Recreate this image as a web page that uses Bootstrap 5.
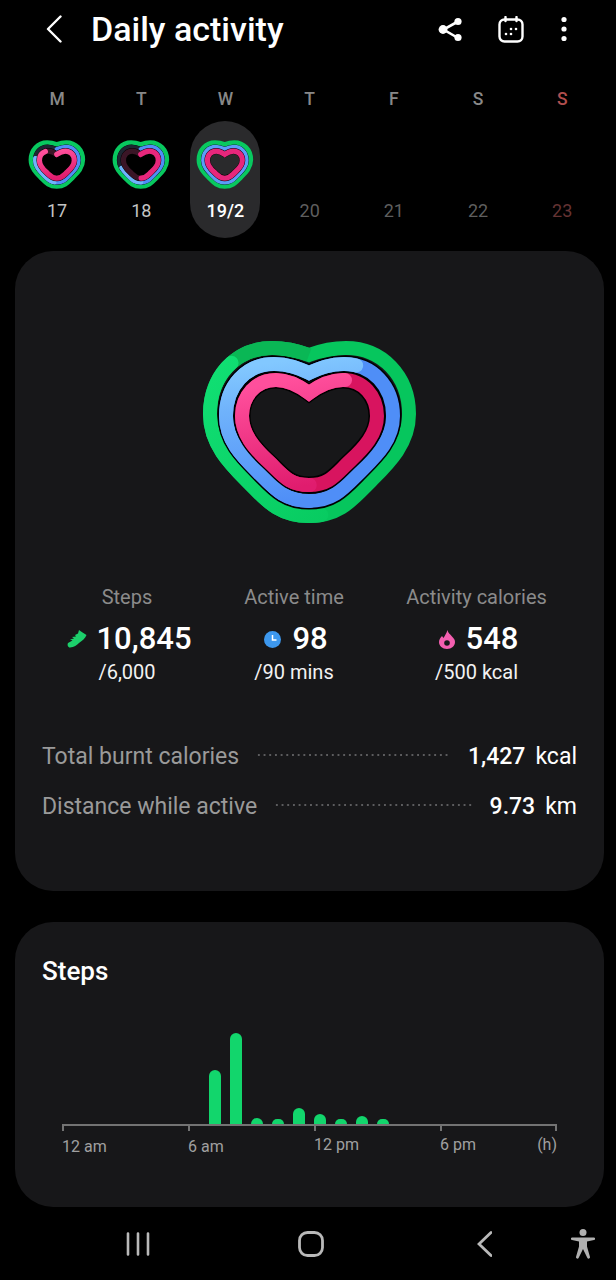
<!DOCTYPE html>
<html lang="en">
<head>
    <meta charset="UTF-8">
    <meta name="viewport" content="width=device-width, initial-scale=1.0">
    <title>Daily activity</title>
    <link href="https://cdn.jsdelivr.net/npm/bootstrap@5.3.2/dist/css/bootstrap.min.css" rel="stylesheet">
    <style>
        body {
            background-color: #000;
            color: #fff;
            font-family: Roboto, "Liberation Sans", sans-serif;
            width: 616px;
            height: 1280px;
            overflow: hidden;
        }
        .app-bar { height: 58px; padding-left: 46px; }
        .app-title { font-size: 34px; font-weight: 500; line-height: 1; margin: 0 0 0 29px; }
        .bar-share { margin-left: auto; }
        .bar-cal { margin-left: 35px; }
        .bar-more { margin-left: 37px; margin-right: 49px; }
        .week { padding: 0 0 0 15px; height: 193px; }
        .week-day { width: 84.2px; height: 180px; text-align: center; padding-top: 31px; flex: none; }
        .week-day.today { position: relative; }
        .today-pill { position: absolute; left: 7px; top: 63px; width: 70px; height: 117px; border-radius: 35px; background: #2a2a2c; }
        .wd { position: relative; font-size: 17.5px; font-weight: 500; line-height: 20px; color: #888; height: 49px; }
        .wd-sun { color: #b04e4e; }
        .wd-heart { position: relative; display: block; margin: 0 auto; }
        .wd-heart-gap { height: 52px; }
        .wd-num { position: relative; font-size: 18px; line-height: 22px; color: #c4c4c4; margin-top: 10px; }
        .wd-num.on { color: #fff; font-weight: 500; }
        .wd-num.off { color: #5e5e5e; }
        .wd-num.off-sun { color: #653333; }
        .panel { background: #171719; border-radius: 38px; margin: 0 12px 0 15px; }
        .panel-main { height: 640px; padding-top: 79px; margin-bottom: 31px; }
        .panel-steps { height: 285px; padding: 34px 47px 0 27px; }
        .big-heart { display: block; margin: 0 auto; }
        .stats { display: grid; grid-template-columns: 224px 110px 1fr; margin-top: 55px; text-align: center; }
        .stat-label { font-size: 20px; line-height: 24px; color: #8b8b8b; white-space: nowrap; }
        .stat-value { font-size: 31px; font-weight: 500; line-height: 36px; margin-top: 12px; padding-left: 4px; gap: 11px; }
        .stat-value-steps { padding-left: 5px; gap: 9px; }
        .stat-goal { font-size: 20px; line-height: 24px; margin-top: 3px; white-space: nowrap; color: #f2f2f2; }
        .totals { padding: 48px 27px 0 27px; }
        .total-row { height: 50px; font-size: 23px; }
        .total-name { color: #9a9a9a; }
        .total-dots { flex: 1; height: 2px; margin: 0 18px 0 17px; transform: translateY(-2px); background-image: radial-gradient(circle, #5c5c5e 0.8px, transparent 1.1px); background-size: 5.7px 2px; }
        .total-val { font-weight: 500; }
        .total-unit { margin-left: 10px; }
        .steps-title { font-size: 26px; font-weight: 500; line-height: 30px; margin: 0; }
        .bars { height: 91px; margin: 47px 0 0 20px; padding-left: 147px; gap: 9px; }
        .step-bar { width: 12px; background: #12d66c; border-radius: 6px 6px 0 0; }
        .axis { position: relative; display: grid; grid-template-columns: 126px 126px 126px 1fr; margin-left: 20px; border-top: 2px solid #737373; width: 495px; }
        .axis::after { content: ""; position: absolute; right: 0; top: 0; width: 2px; height: 5px; background: #737373; }
        .axis-cell { position: relative; font-size: 16px; line-height: 20px; color: #a0a0a0; padding-top: 11px; }
        .axis-cell::before { content: ""; position: absolute; left: 0; top: 0; width: 2px; height: 5px; background: #737373; }
        .axis-pm { padding-top: 9px; }
        .nav-keys { height: 73px; padding: 0 0 0 126px; color: #b9b9b9; }
        .key-home { margin-left: 148px; }
        .key-back { margin-left: 153px; }
        .key-access { margin-left: 79px; }
    </style>
</head>
<body>
    <div class="app-bar d-flex align-items-center">
        <svg width="16" height="28" viewBox="0 0 16 28" fill="none" stroke="#fff" stroke-width="2.4" stroke-linecap="round" stroke-linejoin="round"><path d="M14.500 1.500 2 14l12.500 12.500"/></svg>
        <h1 class="app-title">Daily activity</h1>
        <svg class="bar-share" width="25" height="27" viewBox="0 0 25 27" fill="none"><path d="M20 5.500 5.500 13.500 20 22" stroke="#fff" stroke-width="2.600"/><circle cx="20" cy="5.500" r="3.600" fill="#fff"/><circle cx="5" cy="13.500" r="4.400" fill="#fff"/><circle cx="20" cy="21.500" r="3.600" fill="#fff"/></svg>
        <svg class="bar-cal" width="26" height="27" viewBox="0 0 26 27" fill="none"><rect x="1.500" y="3.500" width="23" height="22" rx="5" stroke="#fff" stroke-width="2.400"/><path d="M7.500 1v4M18.500 1v4" stroke="#fff" stroke-width="2.400" stroke-linecap="round"/><g fill="#fff"><circle cx="8" cy="18" r="1.300"/><circle cx="13" cy="18" r="1.300"/><circle cx="13" cy="13" r="1.300"/><circle cx="18" cy="13" r="1.300"/></g></svg>
        <svg class="bar-more" width="6" height="26" viewBox="0 0 6 26" fill="#fff"><circle cx="3" cy="3.500" r="2.600"/><circle cx="3" cy="13" r="2.600"/><circle cx="3" cy="22.500" r="2.600"/></svg>
    </div>

    <div class="week d-flex">
        <div class="week-day">
            <div class="wd">M</div>
            <svg class="wd-heart" width="62" height="52" viewBox="0 0 240 200">
                <use href="#ring-green" stroke="#08c85f" stroke-width="20"/>
                <use href="#ring-blue" stroke="#000" stroke-width="19"/>
                <use href="#ring-blue" stroke="#1d2733" stroke-width="17"/>
                <use href="#ring-blue" stroke="#4f8ef7" stroke-width="17" stroke-dasharray="78 22" stroke-dashoffset="-22" stroke-linecap="round"/>
                <use href="#ring-blue" stroke="#6fb4fb" stroke-width="17" stroke-dasharray="26 74" stroke-dashoffset="-22" stroke-linecap="round"/>
                <use href="#ring-pink" stroke="#000" stroke-width="23"/>
                <use href="#ring-pink" stroke="#3a1526" stroke-width="20"/>
                <use href="#ring-pink" stroke="url(#grad-pink)" stroke-width="20" stroke-dasharray="88 12" stroke-dashoffset="-12" stroke-linecap="round"/>
            </svg>
            <div class="wd-num">17</div>
        </div>
        <div class="week-day">
            <div class="wd">T</div>
            <svg class="wd-heart" width="62" height="52" viewBox="0 0 240 200">
                <use href="#ring-green" stroke="#08c85f" stroke-width="20"/>
                <use href="#ring-blue" stroke="#000" stroke-width="19"/>
                <use href="#ring-blue" stroke="#1d2733" stroke-width="17"/>
                <use href="#ring-blue" stroke="#4f8ef7" stroke-width="17" stroke-dasharray="70 30" stroke-dashoffset="-30" stroke-linecap="round"/>
                <use href="#ring-blue" stroke="#6fb4fb" stroke-width="17" stroke-dasharray="20 80" stroke-dashoffset="-30" stroke-linecap="round"/>
                <use href="#ring-pink" stroke="#000" stroke-width="23"/>
                <use href="#ring-pink" stroke="#3a1526" stroke-width="20"/>
                <use href="#ring-pink" stroke="#e7277c" stroke-width="20" stroke-dasharray="50 50" stroke-dashoffset="-50" stroke-linecap="round"/>
            </svg>
            <div class="wd-num">18</div>
        </div>
        <div class="week-day today">
            <div class="today-pill"></div>
            <div class="wd">W</div>
            <svg class="wd-heart" width="62" height="52" viewBox="0 0 240 200"><use href="#heart-mini"/></svg>
            <div class="wd-num on">19/2</div>
        </div>
        <div class="week-day"><div class="wd">T</div><div class="wd-heart-gap"></div><div class="wd-num off">20</div></div>
        <div class="week-day"><div class="wd">F</div><div class="wd-heart-gap"></div><div class="wd-num off">21</div></div>
        <div class="week-day"><div class="wd">S</div><div class="wd-heart-gap"></div><div class="wd-num off">22</div></div>
        <div class="week-day"><div class="wd wd-sun">S</div><div class="wd-heart-gap"></div><div class="wd-num off-sun">23</div></div>
    </div>

    <div class="panel panel-main">
        <svg class="big-heart" width="240" height="200" viewBox="0 0 240 200">
            <defs>
                <linearGradient id="grad-green" gradientUnits="userSpaceOnUse" x1="20" y1="50" x2="170" y2="180">
                    <stop offset="0" stop-color="#10de72"/><stop offset="1" stop-color="#07c95f"/>
                </linearGradient>
                <linearGradient id="grad-blue" gradientUnits="userSpaceOnUse" x1="100" y1="30" x2="120" y2="170">
                    <stop offset="0" stop-color="#82c8ff"/><stop offset="0.3" stop-color="#6fb2fb"/><stop offset="1" stop-color="#4f8ef7"/>
                </linearGradient>
                <linearGradient id="grad-pink" gradientUnits="userSpaceOnUse" x1="100" y1="50" x2="120" y2="155">
                    <stop offset="0" stop-color="#ff4f9c"/><stop offset="1" stop-color="#e01c6e"/>
                </linearGradient>
                <path id="ring-pink" fill="none" pathLength="100" d="M119 63C108 55 98 50 86 50 66 50 52 66 52 86 52 104 64 118 78 131 92 144 98 155 119 155 140 155 146 144 160 131 174 118 187 104 187 86 187 66 173 50 153 50 141 50 130 55 119 63Z"/>
                <path id="ring-blue" fill="none" pathLength="100" d="M119 43C108 38 98 34 84 34 56 34 36 56 36 86 36 110 52 126 67 141 84 158 94 171 119 171 144 171 154 158 171 141 186 126 203 110 203 86 203 56 182 34 154 34 140 34 130 38 119 43Z"/>
                <path id="ring-green" fill="none" pathLength="100" d="M119 25C108 21 96 18 82 18 46 18 20 46 20 84 20 114 40 134 57 151 76 170 88 186 119 186 150 186 162 170 181 151 198 134 219 114 219 84 219 46 192 18 156 18 142 18 130 21 119 25Z"/>
                <g id="heart-full">
                    <use href="#ring-green" stroke="#06c65d" stroke-width="14"/>
                    <use href="#ring-green" stroke="#0ab755" stroke-width="14" stroke-dasharray="14 86" stroke-dashoffset="0"/>
                    <use href="#ring-green" stroke="url(#grad-green)" stroke-width="14" stroke-dasharray="38 62" stroke-dashoffset="-14" stroke-linecap="round"/>
                    <use href="#ring-blue" stroke="#000" stroke-width="17"/>
                    <use href="#ring-blue" stroke="#4f8ef7" stroke-width="14"/>
                    <use href="#ring-blue" stroke="url(#grad-blue)" stroke-width="14" stroke-dasharray="60 40" stroke-dashoffset="10" stroke-linecap="round"/>
                    <use href="#ring-pink" stroke="#000" stroke-width="17"/>
                    <use href="#ring-pink" stroke="#d8145f" stroke-width="14"/>
                    <use href="#ring-pink" stroke="url(#grad-pink)" stroke-width="14" stroke-dasharray="60 40" stroke-dashoffset="10" stroke-linecap="round"/>
                </g>
                <g id="heart-mini">
                    <use href="#ring-green" stroke="#08c85f" stroke-width="20"/>
                    <use href="#ring-blue" stroke="#000" stroke-width="19"/>
                    <use href="#ring-blue" stroke="#5b9cf8" stroke-width="17"/>
                    <use href="#ring-pink" stroke="#000" stroke-width="23"/>
                    <use href="#ring-pink" stroke="#e7277c" stroke-width="20"/>
                </g>
            </defs>
            <use href="#heart-full"/>
        </svg>

        <div class="stats">
            <div>
                <div class="stat-label">Steps</div>
                <div class="stat-value stat-value-steps d-flex justify-content-center align-items-center">
                    <svg width="20" height="20" viewBox="0 0 20 20" fill="#1ccf6b"><path d="M12 1C14 3 17 4 19.500 6 18.500 9 15 12 12 14 10 16 7 18.500 3 18.500 1 18.500 0 16 1 14L5.500 11.500 3 10.500 7 9.500 5 8 9 7.500 8 6 11 4.500Z"/></svg>
                    <span>10,845</span>
                </div>
                <div class="stat-goal">/6,000</div>
            </div>
            <div>
                <div class="stat-label">Active time</div>
                <div class="stat-value d-flex justify-content-center align-items-center">
                    <svg width="17" height="17" viewBox="0 0 17 17"><circle cx="8.500" cy="8.500" r="8.500" fill="#3d98ee"/><path d="M8.500 4v5h4" fill="none" stroke="#fff" stroke-width="1.500"/></svg>
                    <span>98</span>
                </div>
                <div class="stat-goal">/90 mins</div>
            </div>
            <div>
                <div class="stat-label">Activity calories</div>
                <div class="stat-value d-flex justify-content-center align-items-center">
                    <svg width="16" height="19" viewBox="0 0 16 19"><path d="M8.500 0C9 3 11 4 13 6.500 15 8.500 16 10 16 12 16 16 12.500 19 8 19 3.500 19 0 16 0 12 0 9.500 1.500 7.500 3 6L4.500 8C5.500 6 7.500 3.500 8.500 0Z" fill="#f45fb0"/><circle cx="8" cy="13" r="2.800" fill="#171719"/></svg>
                    <span>548</span>
                </div>
                <div class="stat-goal">/500 kcal</div>
            </div>
        </div>

        <div class="totals">
            <div class="total-row d-flex align-items-center">
                <span class="total-name">Total burnt calories</span>
                <span class="total-dots"></span>
                <span class="total-val">1,427</span>
                <span class="total-unit">kcal</span>
            </div>
            <div class="total-row d-flex align-items-center">
                <span class="total-name">Distance while active</span>
                <span class="total-dots"></span>
                <span class="total-val">9.73</span>
                <span class="total-unit">km</span>
            </div>
        </div>
    </div>

    <div class="panel panel-steps">
        <h2 class="steps-title">Steps</h2>
        <div class="bars d-flex align-items-end">
            <div class="step-bar" style="height: 54px"></div>
            <div class="step-bar" style="height: 91px"></div>
            <div class="step-bar" style="height: 6px"></div>
            <div class="step-bar" style="height: 5px"></div>
            <div class="step-bar" style="height: 16px"></div>
            <div class="step-bar" style="height: 10px"></div>
            <div class="step-bar" style="height: 5px"></div>
            <div class="step-bar" style="height: 8px"></div>
            <div class="step-bar" style="height: 5px"></div>
        </div>
        <div class="axis">
            <div class="axis-cell">12 am</div>
            <div class="axis-cell">6 am</div>
            <div class="axis-cell axis-pm">12 pm</div>
            <div class="axis-cell axis-pm d-flex justify-content-between">6 pm<span>(h)</span></div>
        </div>
    </div>

    <div class="nav-keys d-flex align-items-center">
        <svg width="24" height="24" viewBox="0 0 24 24" stroke="#b9b9b9" stroke-width="2.600" stroke-linecap="round"><path d="M2 1.500v21M12 1.500v21M22 1.500v21"/></svg>
        <svg class="key-home" width="26" height="26" viewBox="0 0 26 26" fill="none" stroke="#b9b9b9" stroke-width="2.800"><rect x="1.500" y="1.500" width="23" height="23" rx="8"/></svg>
        <svg class="key-back" width="15" height="26" viewBox="0 0 15 26" fill="none" stroke="#b9b9b9" stroke-width="2.800" stroke-linecap="round"><path d="M14 1.500 2 13l12 11.500"/></svg>
        <svg class="key-access" width="24" height="30" viewBox="0 0 24 30" fill="#b0b0b0"><circle cx="12" cy="3.500" r="3.500"/><path d="M1 8.500h22a1 1 0 0 1 0 2.500l-7 1.500v5l3 10.500a1.400 1.400 0 0 1-2.600.9L12 20l-4.400 8.900a1.400 1.400 0 0 1-2.600-.9l3-10.500v-5L1 11a1 1 0 0 1 0-2.500Z"/></svg>
    </div>

    <script src="https://cdn.jsdelivr.net/npm/bootstrap@5.3.2/dist/js/bootstrap.bundle.min.js"></script>
</body>
</html>
